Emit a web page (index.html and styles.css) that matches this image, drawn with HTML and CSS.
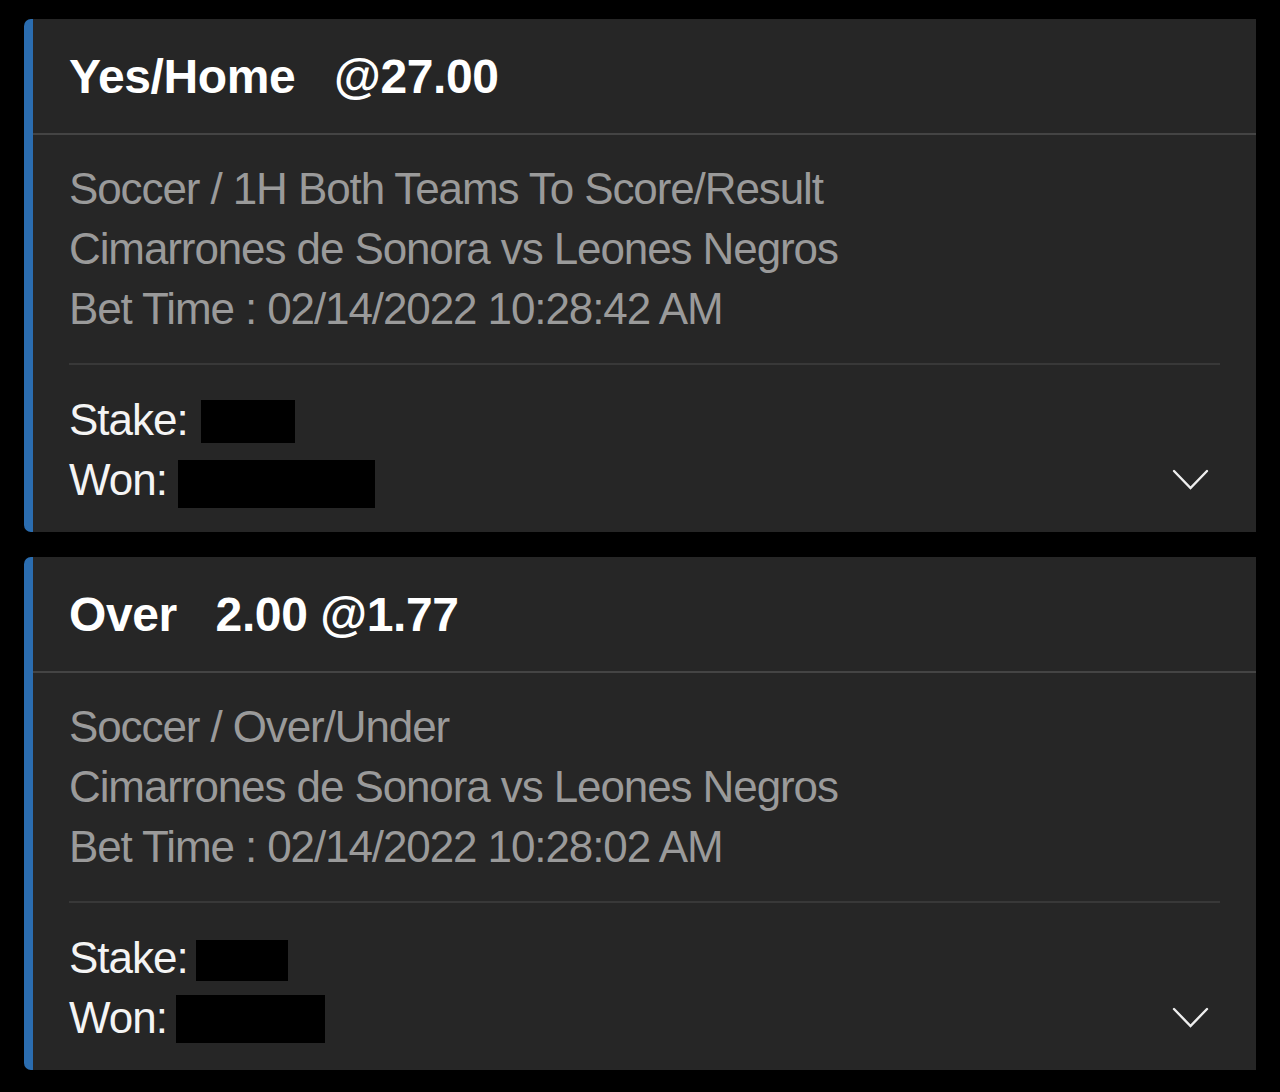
FILE: index.html
```html
<!DOCTYPE html>
<html>
<head>
<meta charset="utf-8">
<title>Bets</title>
<link rel="stylesheet" href="styles.css">
</head>
<body>
<div class="list">
  <div class="card">
    <div class="card-head"><span class="title">Yes/Home   @27.00</span></div>
    <div class="card-body">
      <div class="info">
        <div class="line">Soccer / 1H Both Teams To Score/Result</div>
        <div class="line">Cimarrones de Sonora vs Leones Negros</div>
        <div class="line">Bet Time : 02/14/2022 10:28:42 AM</div>
      </div>
      <div class="footer">
        <div class="amounts">
          <div class="amt">Stake:<span class="redact r-s1"></span></div>
          <div class="amt">Won:<span class="redact r-w1"></span></div>
        </div>
        <svg class="chev" width="40" height="60" viewBox="0 0 40 60"><path d="M4 21 L20.5 38 L37 21" fill="none" stroke="#eeeeee" stroke-width="2.4" stroke-linecap="round" stroke-linejoin="miter"/></svg>
      </div>
    </div>
  </div>
  <div class="card">
    <div class="card-head"><span class="title">Over   2.00 @1.77</span></div>
    <div class="card-body">
      <div class="info">
        <div class="line">Soccer / Over/Under</div>
        <div class="line">Cimarrones de Sonora vs Leones Negros</div>
        <div class="line">Bet Time : 02/14/2022 10:28:02 AM</div>
      </div>
      <div class="footer">
        <div class="amounts">
          <div class="amt">Stake:<span class="redact r-s2"></span></div>
          <div class="amt">Won:<span class="redact r-w2"></span></div>
        </div>
        <svg class="chev" width="40" height="60" viewBox="0 0 40 60"><path d="M4 21 L20.5 38 L37 21" fill="none" stroke="#eeeeee" stroke-width="2.4" stroke-linecap="round" stroke-linejoin="miter"/></svg>
      </div>
    </div>
  </div>
</div>
</body>
</html>
```

FILE: styles.css
```css
html, body {
  margin: 0;
  padding: 0;
  background: #000;
}
body {
  font-family: "Liberation Sans", Arial, Helvetica, sans-serif;
  width: 1280px;
  height: 1092px;
  overflow: hidden;
}
.list {
  display: flex;
  flex-direction: column;
  gap: 25px;
  padding: 19px 24px 0 24px;
}
.card {
  background: #262626;
  border-left: 9px solid #2b6db0;
  border-radius: 7px 0 0 7px;
  height: 513px;
  box-sizing: border-box;
}
.card-head {
  border-bottom: 2px solid #444444;
  display: flex;
  align-items: center;
  padding-left: 36px;
  box-sizing: border-box;
  height: 116px;
}
.title {
  white-space: pre;
  color: #ffffff;
  font-weight: 700;
  font-size: 48px;
  line-height: 56px;
  letter-spacing: -0.4px;
  padding-top: 1px;
}
.card-body {
  padding: 24px 36px 0 36px;
}
.info {
  border-bottom: 2px solid #383838;
  padding-bottom: 24px;
}
.line {
  color: #9a9a9a;
  font-size: 44px;
  line-height: 60px;
  letter-spacing: -1.1px;
  white-space: nowrap;
}
.footer {
  display: flex;
  justify-content: space-between;
  align-items: flex-end;
  padding-top: 25px;
}
.amt {
  color: #f4f4f4;
  font-size: 44px;
  line-height: 60px;
  letter-spacing: -1px;
  white-space: nowrap;
}
.redact {
  display: inline-block;
  background: #000;
  vertical-align: middle;
  position: relative;
}
.r-s1 { width: 94px; height: 43px; margin-left: 13px; top: -2px; }
.r-w1 { width: 197px; height: 48px; margin-left: 11px; top: 1px; }
.r-s2 { width: 92px; height: 41px; margin-left: 8px; top: -1px; }
.r-w2 { width: 149px; height: 48px; margin-left: 9px; top: -2px; }
.chev {
  display: block;
  margin-right: 10px;
}
```
